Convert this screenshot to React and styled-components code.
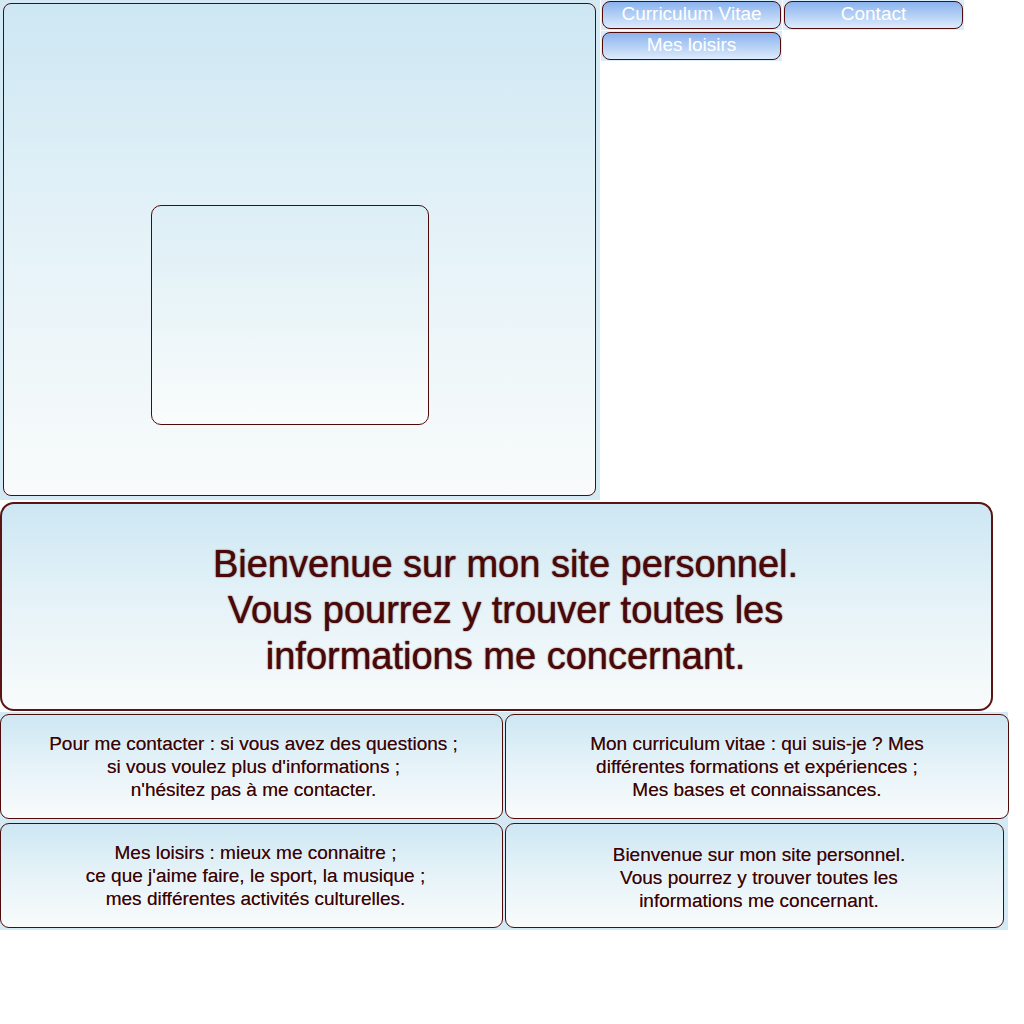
import React from "react";
import styled, { createGlobalStyle } from "styled-components";

const GlobalStyle = createGlobalStyle`
  body {
    margin: 0;
    background: #ffffff;
    font-family: "Liberation Sans", Arial, sans-serif;
  }
`;

const maroon = "#4f0a0a";
const ink = "#3a0202";
const paleGradient = "linear-gradient(to bottom, #cde7f3 0%, #e4f2f8 45%, #f9fbfb 100%)";

const Page = styled.div`
  width: 1024px;
`;

const TopRow = styled.div`
  display: flex;
  align-items: flex-start;
`;

const Frame = styled.div`
  width: 600px;
  height: 500px;
  box-sizing: border-box;
  padding: 3px 4px 4px 3px;
  background: #d3e9f4;
`;

const FrameBox = styled.div`
  height: 100%;
  box-sizing: border-box;
  border: 1px solid ${maroon};
  border-radius: 8px;
  background: ${paleGradient};
  padding: 201px 0 0 147px;
`;

const Inset = styled.div`
  width: 278px;
  height: 220px;
  box-sizing: border-box;
  border: 1px solid ${maroon};
  border-radius: 10px;
  background: linear-gradient(to bottom, #dceef6 0%, #eaf5f8 50%, #fafcfc 100%);
`;

const Nav = styled.nav`
  display: grid;
  grid-template-columns: 181px 181px;
  column-gap: 1px;
  row-gap: 1px;
  padding: 0 0 0 1px;
`;

const NavCell = styled.div`
  padding: 1px;
  background: #dcecf9;
`;

const NavButton = styled.a`
  display: flex;
  align-items: center;
  justify-content: center;
  height: 28px;
  box-sizing: border-box;
  border: 1px solid ${maroon};
  border-radius: 8px;
  background: linear-gradient(to bottom, #8cb3ee 0%, #b3cff5 50%, #deebfc 100%);
  color: #ffffff;
  font-size: 19px;
  padding-bottom: 2px;
  text-decoration: none;
  cursor: pointer;
`;

const Banner = styled.section`
  width: 993px;
  height: 209px;
  margin-top: 2px;
  box-sizing: border-box;
  border: 2px solid #5a1414;
  border-radius: 14px;
  background: ${paleGradient};
  display: flex;
  align-items: center;
  justify-content: center;
  padding: 6px 0 0 18px;
`;

const BannerText = styled.p`
  margin: 0;
  text-align: center;
  font-size: 38px;
  line-height: 46px;
  color: #4a0808;
  text-shadow: 0 0 1px rgba(74, 10, 10, 0.9), 0 0 2px rgba(74, 10, 10, 0.4);
`;

const CardGrid = styled.div`
  display: grid;
  grid-template-columns: 503px 505px;
  margin-top: 1px;
`;

const CardCell = styled.div`
  padding: 2px 0 2px ${(p) => (p.$right ? "2px" : "0")};
  background: #d3e9f4;
`;

const Card = styled.div`
  width: ${(p) => p.$width}px;
  height: 105px;
  box-sizing: border-box;
  border: 1px solid ${maroon};
  border-radius: 9px;
  background: ${paleGradient};
  display: flex;
  align-items: center;
  justify-content: center;
  padding-top: ${(p) => p.$shift || 0}px;
  padding-left: ${(p) => p.$indent || 0}px;
`;

const CardText = styled.p`
  margin: 0;
  text-align: center;
  font-size: 19px;
  line-height: 23px;
  color: ${ink};
  text-shadow: 0 0 0.5px rgba(58, 2, 2, 0.6);
`;

const navItems = ["Curriculum Vitae", "Contact", "Mes loisirs"];

const cards = [
  {
    lines: ["Pour me contacter : si vous avez des questions ;", "si vous voulez plus d'informations ;", "n'hésitez pas à me contacter."],
    width: 503,
    indent: 4,
  },
  {
    lines: ["Mon curriculum vitae : qui suis-je ? Mes", "différentes formations et expériences ;", "Mes bases et connaissances."],
    width: 504,
    right: true,
  },
  {
    lines: ["Mes loisirs : mieux me connaitre ;", "ce que j'aime faire, le sport, la musique ;", "mes différentes activités culturelles."],
    width: 503,
    indent: 8,
  },
  {
    lines: ["Bienvenue sur mon site personnel.", "Vous pourrez y trouver toutes les", "informations me concernant."],
    width: 499,
    right: true,
    shift: 4,
    indent: 9,
  },
];

const App = () => (
  <Page>
    <GlobalStyle />
    <TopRow>
      <Frame>
        <FrameBox>
          <Inset />
        </FrameBox>
      </Frame>
      <Nav>
        {navItems.map((label) => (
          <NavCell key={label}>
            <NavButton href="#">{label}</NavButton>
          </NavCell>
        ))}
      </Nav>
    </TopRow>
    <Banner>
      <BannerText>
        Bienvenue sur mon site personnel.
        <br />
        Vous pourrez y trouver toutes les
        <br />
        informations me concernant.
      </BannerText>
    </Banner>
    <CardGrid>
      {cards.map((card, i) => (
        <CardCell key={i} $right={card.right}>
          <Card $width={card.width} $shift={card.shift} $indent={card.indent}>
            <CardText>
              {card.lines.map((line, j) => (
                <React.Fragment key={j}>
                  {line}
                  {j < card.lines.length - 1 && <br />}
                </React.Fragment>
              ))}
            </CardText>
          </Card>
        </CardCell>
      ))}
    </CardGrid>
  </Page>
);

export default App;
